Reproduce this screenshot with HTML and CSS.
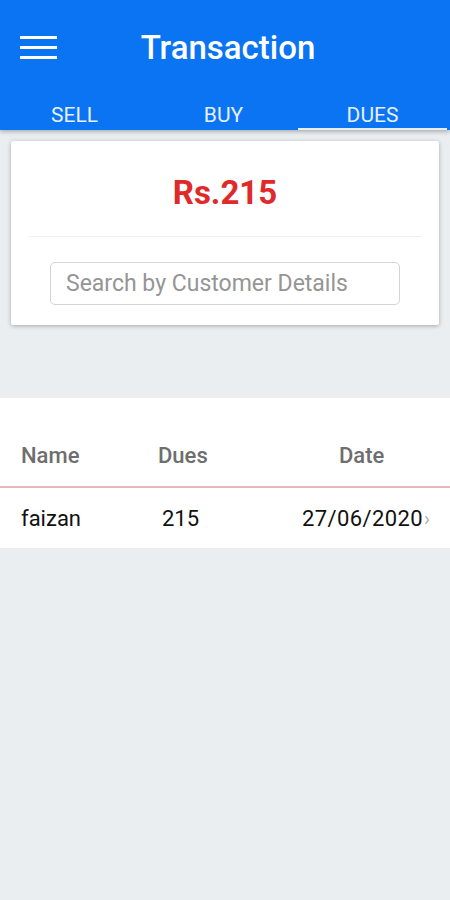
FILE: index.html
```html
<!DOCTYPE html>
<html lang="en">
<head>
    <meta charset="UTF-8">
    <meta name="viewport" content="width=device-width, initial-scale=1.0">
    <title>Transaction</title>
    <link rel="stylesheet" href="styles.css">
</head>
<body>
    <div class="header">
        <div class="toolbar">
            <div class="menu">
                <span></span><span></span><span></span>
            </div>
            <h1>Transaction</h1>
        </div>
        <div class="tabs">
            <div class="tab">SELL</div>
            <div class="tab">BUY</div>
            <div class="tab active">DUES</div>
        </div>
    </div>

    <div class="card">
        <div class="amount">Rs.215</div>
        <div class="search">
            <input type="text" placeholder="Search by Customer Details">
        </div>
    </div>

    <div class="list">
        <div class="row head">
            <div class="c-name">Name</div>
            <div class="c-dues">Dues</div>
            <div class="c-date">Date</div>
        </div>
        <div class="row item">
            <div class="c-name">faizan</div>
            <div class="c-dues">215</div>
            <div class="c-date">27/06/2020<span class="chev">›</span></div>
        </div>
    </div>
</body>
</html>
```

FILE: styles.css
```css
body {
    margin: 0;
    font-family: Roboto, "Noto Sans", Arial, sans-serif;
    background-color: #eaeef1;
    height: 900px;
}
.header {
    background-color: #0a74f2;
    height: 130px;
    box-shadow: 0 2px 4px rgba(0, 0, 0, 0.25);
    display: flex;
    flex-direction: column;
}
.toolbar {
    height: 94px;
    display: flex;
    align-items: center;
    position: relative;
}
.menu {
    margin-left: 20px;
    width: 37px;
    display: flex;
    flex-direction: column;
    gap: 7px;
}
.menu span {
    display: block;
    height: 3px;
    background-color: white;
}
h1 {
    margin: 0;
    position: absolute;
    left: 0;
    right: 0;
    text-align: center;
    color: white;
    font-size: 33px;
    font-weight: 500;
    padding-left: 6px;
}
.tabs {
    display: flex;
    flex: 1;
}
.tab {
    flex: 1;
    text-align: center;
    color: #e6f0ff;
    font-size: 21px;
    padding-top: 9px;
    box-sizing: border-box;
}
.tab.active {
    border-bottom: 2px solid #e8edf2;
    margin-right: 3px;
}
.card {
    background-color: white;
    margin: 11px 11px 0 11px;
    height: 184px;
    box-shadow: 0 1px 4px rgba(0, 0, 0, 0.3);
    border-radius: 2px;
    display: flex;
    flex-direction: column;
    align-items: center;
}
.amount {
    color: #e02a2a;
    font-size: 33px;
    font-weight: bold;
    padding-top: 32px;
    height: 63px;
    width: 394px;
    text-align: center;
    border-bottom: 1px solid #f0f0f0;
}
.search {
    margin-top: 25px;
}
.search input {
    width: 350px;
    height: 43px;
    box-sizing: border-box;
    border: 1px solid #d4d4d4;
    border-radius: 5px;
    padding: 0 15px;
    font-family: Roboto, "Noto Sans", Arial, sans-serif;
    font-size: 23px;
    color: #333;
}
.search input::placeholder {
    color: #959595;
}
.list {
    background-color: white;
    margin-top: 73px;
    padding-top: 26px;
}
.row {
    display: flex;
    align-items: center;
    font-size: 22px;
}
.row.head {
    height: 62px;
    color: #6e6e6e;
    font-weight: 500;
    border-bottom: 2px solid #e8b8b8;
}
.row.item {
    height: 60px;
    color: #111;
}
.c-name {
    width: 137px;
    padding-left: 21px;
}
.c-dues {
    width: 144px;
}
.item .c-dues {
    padding-left: 4px;
    width: 140px;
}
.c-date {
    flex: 1;
}
.item .c-date {
    letter-spacing: 0.4px;
}
.head .c-date {
    padding-left: 37px;
}
.chev {
    color: #b0b0b0;
    font-size: 20px;
    margin-left: 1px;
}
```
